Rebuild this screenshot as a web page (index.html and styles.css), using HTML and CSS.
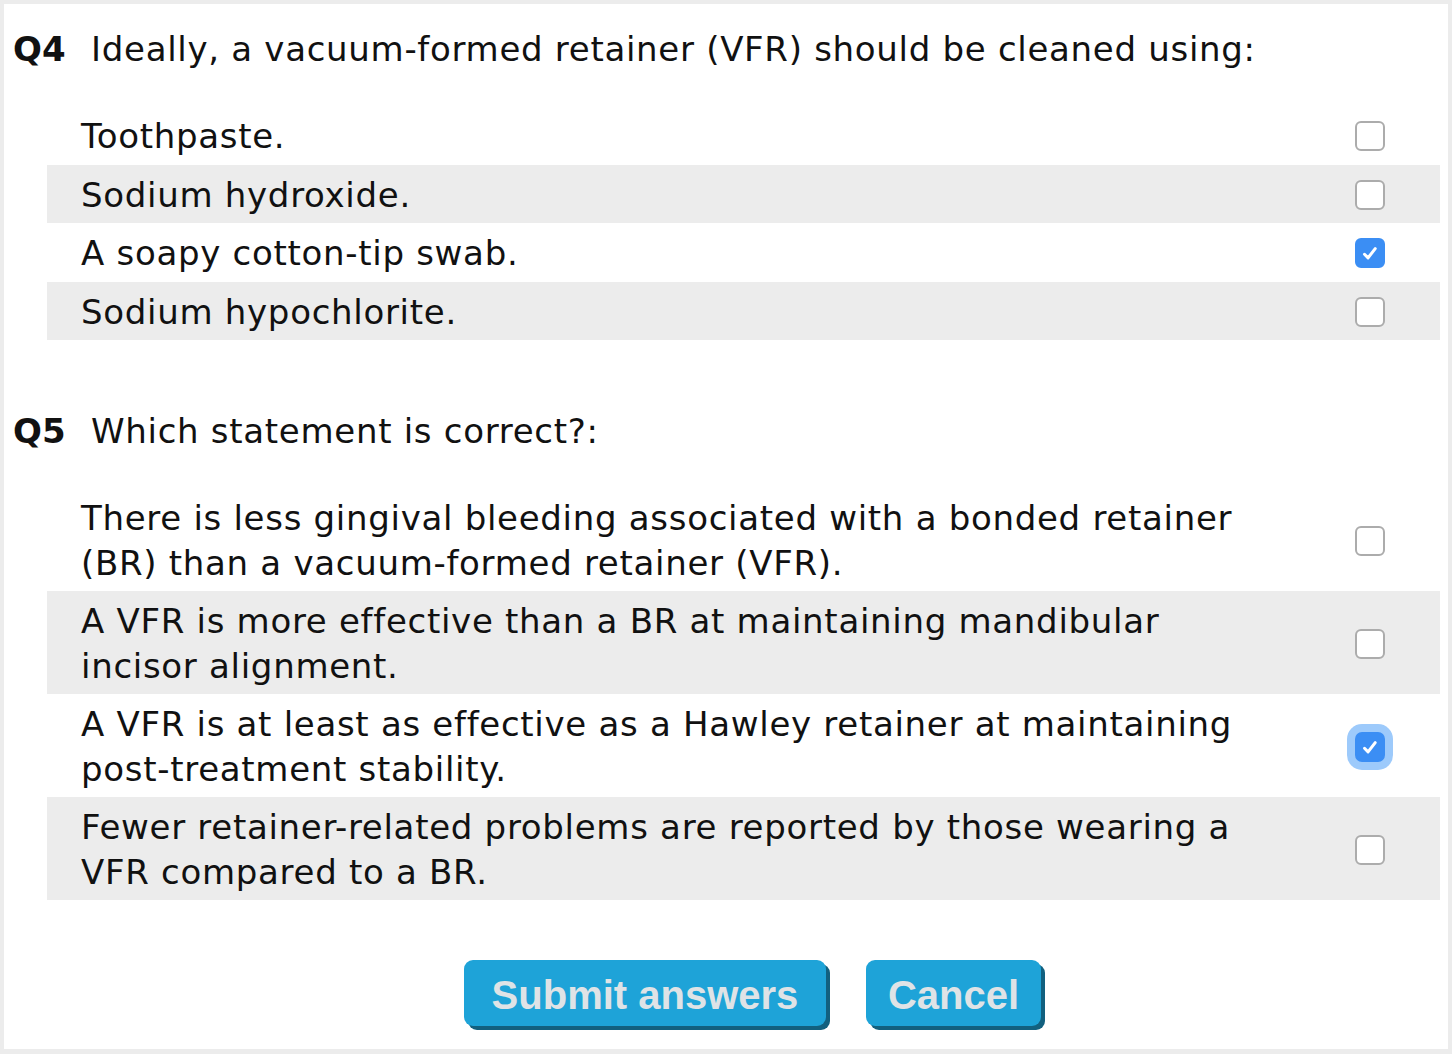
FILE: index.html
```html
<!DOCTYPE html>
<html lang="en">
<head>
    <meta charset="UTF-8">
    <title>Retainer Quiz</title>
    <link rel="stylesheet" href="styles.css">
</head>
<body>

<div class="panel">

    <div class="question">
        <h3 class="q-title"><span class="q-num">Q4</span>Ideally, a vacuum-formed retainer (VFR) should be cleaned using:</h3>
        <div class="answers">
            <div class="answer">
                <div class="answer-text">Toothpaste.</div>
                <div class="answer-box"><span class="check"></span></div>
            </div>
            <div class="answer">
                <div class="answer-text">Sodium hydroxide.</div>
                <div class="answer-box"><span class="check"></span></div>
            </div>
            <div class="answer">
                <div class="answer-text">A soapy cotton-tip swab.</div>
                <div class="answer-box">
                    <span class="check checked">
                        <svg viewBox="0 0 16 16" width="22" height="22"><path d="M4 8.9 L6.6 11.5 L11.8 4.8" fill="none" stroke="#fff" stroke-width="2.2" stroke-linecap="round" stroke-linejoin="round"/></svg>
                    </span>
                </div>
            </div>
            <div class="answer">
                <div class="answer-text">Sodium hypochlorite.</div>
                <div class="answer-box"><span class="check"></span></div>
            </div>
        </div>
    </div>

    <div class="question">
        <h3 class="q-title"><span class="q-num">Q5</span>Which statement is correct?:</h3>
        <div class="answers">
            <div class="answer">
                <div class="answer-text">There is less gingival bleeding associated with a bonded retainer (BR) than a vacuum-formed retainer (VFR).</div>
                <div class="answer-box"><span class="check"></span></div>
            </div>
            <div class="answer">
                <div class="answer-text">A VFR is more effective than a BR at maintaining mandibular incisor alignment.</div>
                <div class="answer-box"><span class="check"></span></div>
            </div>
            <div class="answer">
                <div class="answer-text">A VFR is at least as effective as a Hawley retainer at maintaining post-treatment stability.</div>
                <div class="answer-box">
                    <span class="check checked focused">
                        <svg viewBox="0 0 16 16" width="22" height="22"><path d="M4 8.9 L6.6 11.5 L11.8 4.8" fill="none" stroke="#fff" stroke-width="2.2" stroke-linecap="round" stroke-linejoin="round"/></svg>
                    </span>
                </div>
            </div>
            <div class="answer">
                <div class="answer-text">Fewer retainer-related problems are reported by those wearing a VFR compared to a BR.</div>
                <div class="answer-box"><span class="check"></span></div>
            </div>
        </div>
    </div>

    <div class="buttons">
        <button class="btn btn-submit">Submit answers</button>
        <button class="btn btn-cancel">Cancel</button>
    </div>

</div>

</body>
</html>
```

FILE: styles.css
```css
body {
    margin: 0;
    padding: 4px 4px 5px 4px;
    background: #ececec;
    font-family: "DejaVu Sans", Verdana, sans-serif;
    color: #111;
}
.panel {
    background: #fff;
    padding: 23px 8px 23px 9px;
}
.question {
    margin-bottom: 69px;
}
.q-title {
    margin: 0 0 35px 0;
    font-size: 34px;
    font-weight: normal;
    line-height: 44px;
    letter-spacing: 0.7px;
}
.q-num {
    display: inline-block;
    width: 78px;
    font-weight: bold;
    letter-spacing: 0;
}
.answers {
    margin-left: 34px;
}
.answer {
    display: grid;
    grid-template-columns: 1fr 140px;
    align-items: center;
}
.answer:nth-child(even) {
    background: #ececec;
}
.answer-text {
    padding: 8px 40px 6px 34px;
    font-size: 34px;
    line-height: 44.5px;
    letter-spacing: 0.7px;
}
.answer-box {
    display: flex;
    justify-content: center;
    padding-top: 2px;
}
.check {
    display: flex;
    align-items: center;
    justify-content: center;
    width: 26px;
    height: 26px;
    border: 2px solid #acacac;
    border-radius: 6px;
    background: #fff;
}
.check.checked {
    border-color: #3b8ef4;
    background: #3b8ef4;
}
.check.focused {
    box-shadow: 0 0 0 8px #9dcafb;
    border-radius: 7px;
}
.buttons {
    display: flex;
    gap: 40px;
    margin-top: -9px;
    padding-left: 451px;
}
.btn {
    height: 66px;
    padding: 4px 0 0 0;
    border: none;
    border-radius: 9px;
    background: #1ea3d8;
    box-shadow: 4px 4px 0 #12607f;
    color: #dfe3e6;
    font-family: "Liberation Sans", Arial, sans-serif;
    font-weight: bold;
    font-size: 40px;
    cursor: pointer;
}
.btn-submit {
    width: 362px;
}
.btn-cancel {
    width: 175px;
}
```
